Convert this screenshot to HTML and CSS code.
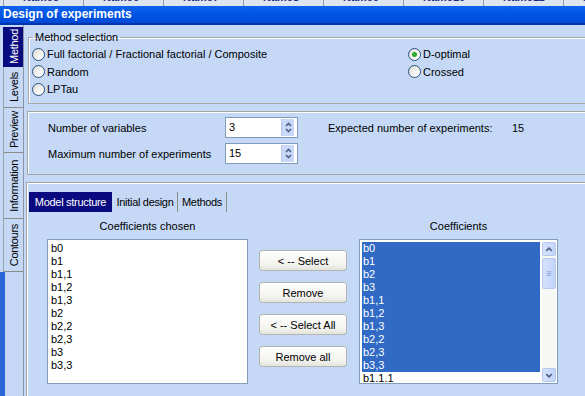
FILE: index.html
```html
<!DOCTYPE html>
<html lang="en">
<head>
    <meta charset="UTF-8">
    <title>Design of experiments</title>
    <link rel="stylesheet" href="styles.css">
</head>
<body>
    <div class="grid-head">
        <span>Name5</span><span>Name6</span><span>Name7</span><span>Name8</span>
        <span>Name9</span><span>Name10</span><span>Name11</span><span>Name12</span>
    </div>
    <div class="titlebar">Design of experiments</div>

    <div class="window">
        <nav class="side-tabs">
            <div class="side-tab active" style="height:40px"><span>Method</span></div>
            <div class="side-tab" style="height:41px"><span>Levels</span></div>
            <div class="side-tab" style="height:45px"><span>Preview</span></div>
            <div class="side-tab" style="height:66px"><span>Information</span></div>
            <div class="side-tab" style="height:53px"><span>Contours</span></div>
            <div class="side-rest"></div>
        </nav>

        <div class="content">
            <fieldset class="method-box">
                <legend>Method selection</legend>
                <label class="radio"><span class="dot"></span>Full factorial / Fractional factorial / Composite</label>
                <label class="radio"><span class="dot"></span>Random</label>
                <label class="radio"><span class="dot"></span>LPTau</label>
                <label class="radio"><span class="dot checked"></span>D-optimal</label>
                <label class="radio"><span class="dot"></span>Crossed</label>
            </fieldset>

            <section class="counts">
                <div class="field-label">Number of variables</div>
                <div class="spin">
                    <span class="spin-value">3</span>
                    <span class="spin-btns">
                        <svg width="11" height="17" viewBox="0 0 11 17"><path d="M3 7 L5.5 4.5 L8 7 M3 10 L5.5 12.5 L8 10" fill="none" stroke="#4d6185" stroke-width="1.6"/></svg>
                    </span>
                </div>
                <div class="field-label expected">Expected number of experiments:</div>
                <div class="field-label">15</div>

                <div class="field-label">Maximum number of experiments</div>
                <div class="spin">
                    <span class="spin-value">15</span>
                    <span class="spin-btns">
                        <svg width="11" height="17" viewBox="0 0 11 17"><path d="M3 7 L5.5 4.5 L8 7 M3 10 L5.5 12.5 L8 10" fill="none" stroke="#4d6185" stroke-width="1.6"/></svg>
                    </span>
                </div>
            </section>

            <section class="model">
                <div class="tabs">
                    <div class="tab active" style="width:83px">Model structure</div>
                    <div class="tab" style="width:64px">Initial design</div>
                    <div class="tab" style="width:48px">Methods</div>
                </div>

                <div class="lists">
                    <div class="col-title">Coefficients chosen</div>
                    <div></div>
                    <div class="col-title">Coefficients</div>

                    <ul class="listbox">
                        <li>b0</li><li>b1</li><li>b1,1</li><li>b1,2</li><li>b1,3</li>
                        <li>b2</li><li>b2,2</li><li>b2,3</li><li>b3</li><li>b3,3</li>
                    </ul>

                    <div class="actions">
                        <button type="button" class="btn">&lt; -- Select</button>
                        <button type="button" class="btn">Remove</button>
                        <button type="button" class="btn">&lt; -- Select All</button>
                        <button type="button" class="btn">Remove all</button>
                    </div>

                    <div class="listbox scrolled">
                        <ul class="items">
                            <li class="sel">b0</li><li class="sel">b1</li><li class="sel">b2</li><li class="sel">b3</li>
                            <li class="sel">b1,1</li><li class="sel">b1,2</li><li class="sel">b1,3</li><li class="sel">b2,2</li>
                            <li class="sel">b2,3</li><li class="sel">b3,3</li><li>b1.1.1</li>
                        </ul>
                        <div class="scrollbar">
                            <span class="sb-btn">
                                <svg width="13" height="13" viewBox="0 0 13 13"><path d="M3.5 8 L6.5 5 L9.5 8" fill="none" stroke="#4d6185" stroke-width="1.8"/></svg>
                            </span>
                            <span class="sb-thumb">
                                <svg width="13" height="10" viewBox="0 0 13 10"><path d="M4 2.5 H9 M4 4.5 H9 M4 6.5 H9" stroke="#8ea6d8" stroke-width="1"/></svg>
                            </span>
                            <span class="sb-track"></span>
                            <span class="sb-btn">
                                <svg width="13" height="13" viewBox="0 0 13 13"><path d="M3.5 5 L6.5 8 L9.5 5" fill="none" stroke="#4d6185" stroke-width="1.8"/></svg>
                            </span>
                        </div>
                    </div>
                </div>
            </section>
        </div>
    </div>
</body>
</html>
```

FILE: styles.css
```css
body {
    margin: 0;
    width: 585px;
    height: 396px;
    overflow: hidden;
    font-family: "Liberation Sans", Arial, sans-serif;
    font-size: 11px;
    color: #000;
    background-color: #c5d9f6;
}

/* strip of the grid behind the dialog */
.grid-head {
    display: flex;
    height: 6px;
    overflow: hidden;
    padding-left: 3px;
    background-color: #dde5f1;
}

.grid-head span {
    flex: 0 0 80px;
    box-sizing: border-box;
    height: 16px;
    margin-top: -10px;
    padding-left: 19px;
    line-height: 14px;
    border-left: 1px solid #8d9bb0;
    font-weight: bold;
    color: #1b2b7e;
}

.titlebar {
    height: 17px;
    line-height: 17px;
    padding-left: 3px;
    background: linear-gradient(#0c62ee, #0052e2 60%, #0049d8);
    border-bottom: 2px solid #0036ab;
    color: white;
    font-size: 12px;
    font-weight: bold;
}

.window {
    display: flex;
    height: 371px;
}

/* vertical tabs */
.side-tabs {
    display: flex;
    flex-direction: column;
    width: 23px;
    padding-top: 2px;
    border-right: 1px solid #8a96a8;
}

.side-tab {
    display: flex;
    align-items: center;
    justify-content: center;
    flex-shrink: 0;
    box-sizing: border-box;
    margin-left: 3px;
    border-left: 1px solid #9aa3b0;
    border-bottom: 1px solid #8c8c8c;
}

.side-tab span {
    writing-mode: vertical-rl;
    transform: rotate(180deg);
    white-space: nowrap;
    letter-spacing: -0.3px;
}

.side-tab.active {
    background-color: #0a0a80;
    border-color: #0a0a80;
    color: white;
}

.side-rest {
    flex: 1;
    border-left: 5px solid #2a66d9;
}

.content {
    flex: 1;
    display: flex;
    flex-direction: column;
}

/* method group */
.method-box {
    display: grid;
    grid-template-columns: 376px 1fr;
    grid-template-rows: 18px 17px 18px;
    grid-auto-flow: column;
    margin: 6px 0 0 4px;
    padding: 1px 0 5px 3px;
    min-width: 0;
    border: 1px solid #a9a9a9;
    border-right: none;
    box-shadow: inset 1px 1px #fff;
}

.method-box legend {
    padding: 0 2px;
    margin-left: 1px;
    line-height: 13px;
}

.radio {
    display: flex;
    align-items: center;
    gap: 2px;
    white-space: nowrap;
}

.dot {
    position: relative;
    width: 11px;
    height: 11px;
    border: 1px solid #2b4f7e;
    border-radius: 50%;
    background: linear-gradient(135deg, #dcdcd5, #fafaf8 70%);
}

.dot.checked::after {
    content: "";
    position: absolute;
    left: 3px;
    top: 3px;
    width: 5px;
    height: 5px;
    border-radius: 50%;
    background-color: #2ea72e;
}

/* counts panel */
.counts {
    display: grid;
    grid-template-columns: 177px 103px 184px auto;
    grid-auto-rows: 21px;
    row-gap: 5px;
    align-items: center;
    height: 64px;
    box-sizing: border-box;
    margin: 7px 0 0 3px;
    padding: 5px 0 0 20px;
    border: 1px solid #a3a3a3;
    border-right: none;
    box-shadow: inset 1px 1px #fff;
}

.spin {
    display: flex;
    width: 73px;
    height: 21px;
    box-sizing: border-box;
    border: 1px solid #7f9db9;
    background-color: white;
}

.spin-value {
    flex: 1;
    padding-left: 3px;
    line-height: 19px;
}

.spin-btns {
    display: flex;
    align-items: center;
    width: 11px;
    margin: 1px 3px 1px 0;
    border-left: 1px solid #b9c8e2;
    padding-left: 1px;
    background-color: #c9d8f8;
}

/* model section */
.model {
    flex: 1;
    margin: 7px 0 0 2px;
    border-top: 1px solid #a3a3a3;
    border-left: 1px solid #a3a3a3;
    box-shadow: inset 1px 1px #fff;
}

.tabs {
    display: flex;
    margin: 9px 0 0 2px;
}

.tab {
    height: 20px;
    line-height: 20px;
    text-align: center;
    white-space: nowrap;
    letter-spacing: -0.3px;
    border-right: 1px solid #8c8c8c;
}

.tab.active {
    background-color: #0a0a80;
    color: white;
    border-right-color: #c5d9f6;
}

.lists {
    display: grid;
    grid-template-columns: 201px 88px 200px;
    grid-template-rows: 14px 145px;
    column-gap: 11px;
    row-gap: 6px;
    margin: 7px 0 0 20px;
}

.lists > :nth-child(3),
.lists > :nth-child(6) {
    margin-left: 1px;
}

.col-title {
    text-align: center;
    line-height: 14px;
}

.listbox {
    margin: 0;
    padding: 2px 0 0 3px;
    list-style: none;
    box-sizing: border-box;
    border: 1px solid #7f9db9;
    background-color: white;
    overflow: hidden;
}

.listbox li {
    height: 13px;
    line-height: 13px;
}

.actions {
    display: flex;
    flex-direction: column;
    gap: 11px;
    padding-top: 11px;
}

.btn {
    height: 21px;
    padding: 0;
    border: 1px solid #b4b4b4;
    border-radius: 3px;
    background: linear-gradient(#fefefe, #f3f3ef 70%, #e4e4dd);
    font-family: inherit;
    font-size: 11px;
    color: #000;
}

.listbox.scrolled {
    display: flex;
    padding: 2px 1px 1px 2px;
}

.items {
    flex: 1;
    margin: 0;
    padding: 0;
    list-style: none;
    overflow: hidden;
}

.items li {
    padding-left: 1px;
}

.items li.sel {
    background-color: #316ac5;
    color: white;
}

.scrollbar {
    display: flex;
    flex-direction: column;
    width: 14px;
    margin-left: 2px;
    background-color: #f7f7f3;
}

.sb-btn,
.sb-thumb {
    display: flex;
    align-items: center;
    justify-content: center;
    flex-shrink: 0;
    box-sizing: border-box;
    border: 1px solid #b7c8ee;
    border-radius: 2px;
    background: linear-gradient(90deg, #d6e2fc, #c2d4fb);
}

.sb-btn {
    height: 14px;
}

.sb-thumb {
    height: 31px;
    margin-top: 2px;
}

.sb-track {
    flex: 1;
}
```
